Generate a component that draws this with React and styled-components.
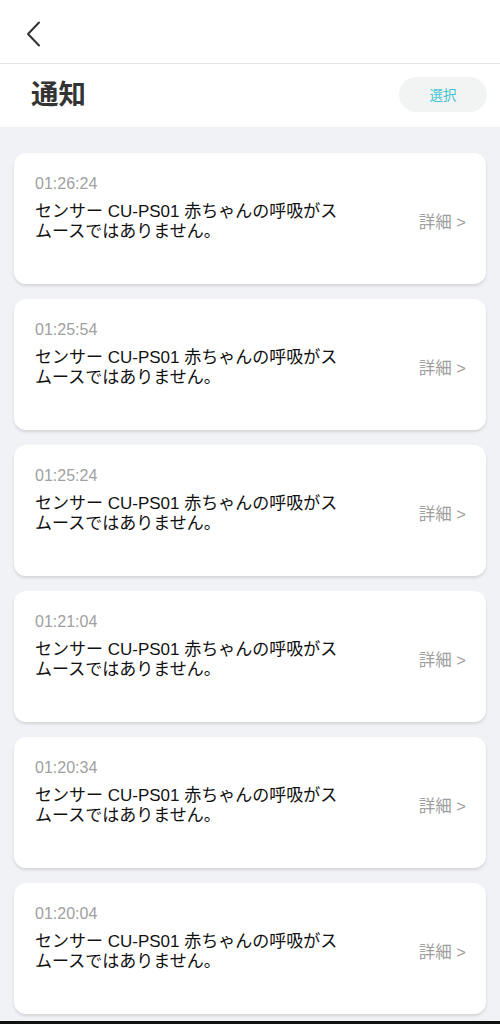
import React from "react";
import styled, { createGlobalStyle } from "styled-components";

const GlobalStyle = createGlobalStyle`
  body {
    margin: 0;
    background: #f1f2f5;
    font-family: "Liberation Sans", "Noto Sans CJK JP", sans-serif;
  }
`;

const items = ["01:26:24", "01:25:54", "01:25:24", "01:21:04", "01:20:34", "01:20:04"];

function App() {
  return (
    <Page>
      <GlobalStyle />
      <TopBar>
        <BackButton aria-label="back">
          <svg width="16" height="26" viewBox="0 0 16 26" fill="none">
            <path d="M13 1.5L2 13l11 11.5" stroke="#333" strokeWidth="2" strokeLinecap="round" strokeLinejoin="round" />
          </svg>
        </BackButton>
      </TopBar>
      <TitleRow>
        <Title>通知</Title>
        <SelectButton>選択</SelectButton>
      </TitleRow>
      <List>
        {items.map((t) => (
          <Card key={t}>
            <Body>
              <Time>{t}</Time>
              <Message>センサー CU-PS01 赤ちゃんの呼吸がスムースではありません。</Message>
            </Body>
            <Detail>詳細 &gt;</Detail>
          </Card>
        ))}
      </List>
      <BottomEdge />
    </Page>
  );
}

export default App;

const Page = styled.div`
  width: 500px;
  min-height: 1024px;
  background: #f1f2f5;
`;

const TopBar = styled.div`
  height: 63px;
  background: #fff;
  border-bottom: 1px solid #e4e4e4;
  display: flex;
  align-items: center;
  padding-left: 26px;
`;

const BackButton = styled.div`
  display: flex;
  align-items: center;
  margin-top: 4px;
`;

const TitleRow = styled.div`
  height: 63px;
  box-sizing: border-box;
  background: #fff;
  display: flex;
  align-items: center;
  justify-content: space-between;
  padding: 0 13px 3px 31px;
`;

const Title = styled.h1`
  margin: 0 0 3px;
  font-family: "Noto Sans CJK JP", sans-serif;
  font-size: 27.5px;
  line-height: 1.2;
  font-weight: 700;
  color: #333;
`;

const SelectButton = styled.div`
  width: 88px;
  height: 35px;
  border-radius: 18px;
  background: #f2f4f4;
  color: #3fc4d2;
  font-family: "Noto Sans CJK JP", sans-serif;
  font-size: 13.5px;
  display: flex;
  align-items: center;
  justify-content: center;
`;

const List = styled.div`
  display: flex;
  flex-direction: column;
  gap: 15px;
  padding: 26px 14px 7px;
`;

const Card = styled.div`
  height: 131px;
  box-sizing: border-box;
  background: #fff;
  border-radius: 12px;
  box-shadow: 0 2px 3px rgba(0, 0, 0, 0.12);
  padding: 21px 20px 0 21px;
  display: flex;
  align-items: flex-start;
`;

const Body = styled.div`
  flex: 1;
`;

const Time = styled.div`
  font-size: 16px;
  line-height: 20px;
  color: #a0a0a0;
`;

const Message = styled.div`
  margin-top: 8px;
  max-width: 310px;
  font-size: 17px;
  line-height: 20px;
  color: #111;
`;

const Detail = styled.div`
  margin-top: 35px;
  font-size: 16.5px;
  color: #9e9e9e;
  white-space: nowrap;
`;

const BottomEdge = styled.div`
  height: 3px;
  background: #111;
`;
